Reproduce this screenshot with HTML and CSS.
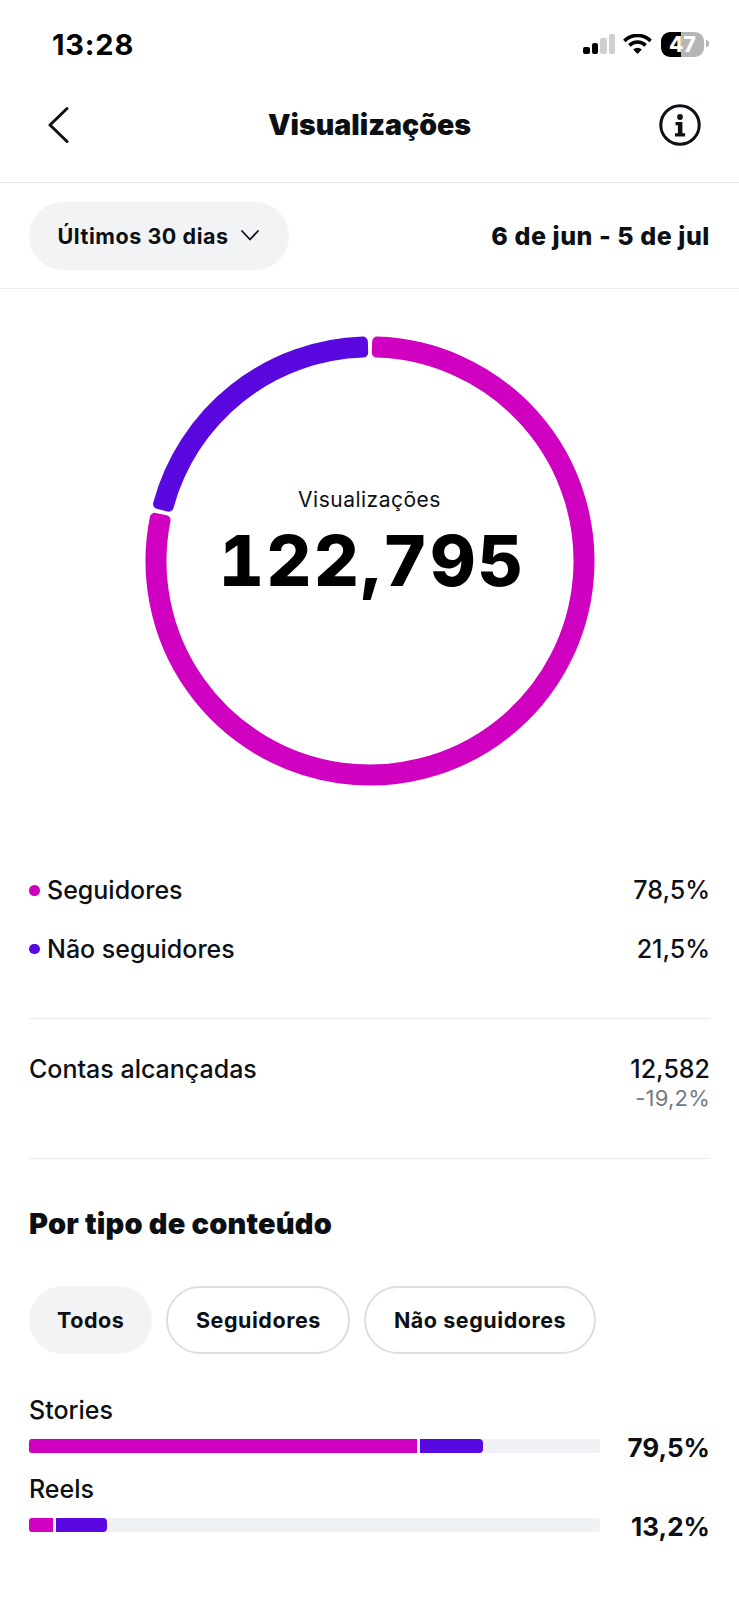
FILE: index.html
```html
<!DOCTYPE html>
<html lang="pt">
<head>
<meta charset="utf-8">
<title>Visualizações</title>
<link rel="stylesheet" href="styles.css">
</head>
<body>
<div class="page">
  <div class="status">
    <span class="time">13:28</span>
    <div class="status-icons">
      <div class="signal">
        <i class="b b1"></i><i class="b b2"></i><i class="b b3"></i><i class="b b4"></i>
      </div>
      <svg class="wifi" width="29" height="20" viewBox="0 0 29 20">
        <path d="M1.4 6.9A18.5 18.5 0 0 1 27.6 6.9M6.4 11.4A11.5 11.5 0 0 1 22.6 11.4" fill="none" stroke="#000" stroke-width="3.6"/>
        <path d="M14.5 20L10.2 15.6A6 6 0 0 1 18.8 15.6Z" fill="#000"/>
      </svg>
      <div class="battery"><span>47</span></div>
    </div>
  </div>

  <header class="nav">
    <svg class="back" width="22" height="38" viewBox="0 0 22 38">
      <path d="M20 2.5L3 19L20 35.5" fill="none" stroke="#0c1014" stroke-width="3" stroke-linecap="round" stroke-linejoin="round"/>
    </svg>
    <h1 class="title">Visualizações</h1>
    <svg class="info" width="42" height="42" viewBox="0 0 42 42">
      <circle cx="21" cy="21" r="19.2" fill="none" stroke="#0c1014" stroke-width="3"/>
      <circle cx="21" cy="13" r="2.9" fill="#0c1014"/>
      <path d="M16.5 18h6.9v11.2h2.7v3.2H16v-3.2h2.9v-8h-2.4z" fill="#0c1014"/>
    </svg>
  </header>

  <div class="filter">
    <div class="pill pill-fill pill-select">Últimos 30 dias
      <svg class="caret" width="18" height="11" viewBox="0 0 18 11">
        <path d="M1 1L9 9.5L17 1" fill="none" stroke="#0c1014" stroke-width="1.8" stroke-linecap="round" stroke-linejoin="round"/>
      </svg>
    </div>
    <div class="range">6 de jun - 5 de jul</div>
  </div>

  <main>
    <div class="ring">
      <svg width="450" height="450" viewBox="0 0 450 450">
        <path class="seg-pink" d="M232.16 5.62A219.5 219.5 0 1 1 9.78 181.88L20.57 184.04A208.5 208.5 0 1 0 231.8 16.61Z"/>
        <path class="seg-blue" d="M217.84 5.62A219.5 219.5 0 0 0 13.05 167.93L23.67 170.79A208.5 208.5 0 0 1 218.2 16.61Z"/>
      </svg>
      <div class="ring-text">
        <div class="ring-label">Visualizações</div>
        <div class="ring-value">122,795</div>
      </div>
    </div>

    <section class="legend">
      <div class="row legend-row"><span class="key"><i class="dot dot-pink"></i>Seguidores</span><span>78,5%</span></div>
      <div class="row legend-row"><span class="key"><i class="dot dot-blue"></i>Não seguidores</span><span>21,5%</span></div>
    </section>

    <section class="reach">
      <div class="row reach-row">
        <span>Contas alcançadas</span>
        <div class="reach-values">
          <div>12,582</div>
          <div class="delta">-19,2%</div>
        </div>
      </div>
    </section>

    <section class="types">
      <h2 class="heading">Por tipo de conteúdo</h2>
      <div class="tabs">
        <div class="pill pill-fill tab-first">Todos</div>
        <div class="pill pill-line">Seguidores</div>
        <div class="pill pill-line">Não seguidores</div>
      </div>
      <div class="metric">
        <div class="metric-name">Stories</div>
        <div class="metric-row">
          <div class="track">
            <div class="part part-pink" style="width:67.9%"></div>
            <div class="part part-blue" style="width:11.1%"></div>
          </div>
          <span class="metric-pct">79,5%</span>
        </div>
      </div>
      <div class="metric">
        <div class="metric-name">Reels</div>
        <div class="metric-row">
          <div class="track">
            <div class="part part-pink" style="width:4.15%"></div>
            <div class="part part-blue" style="width:8.9%"></div>
          </div>
          <span class="metric-pct">13,2%</span>
        </div>
      </div>
    </section>
  </main>
</div>
</body>
</html>
```
FILE: styles.css
```css
* { box-sizing: border-box; }
html, body { margin: 0; background: #fff; }
body { font-family: Inter, "Liberation Sans", sans-serif; color: #0c1014; }
.page { width: 739px; height: 1600px; overflow: hidden; }

.status { height: 88px; padding: 1px 30px 0 52px; display: flex; align-items: center; justify-content: space-between; }
.time { font-size: 29px; font-weight: 700; color: #000; line-height: 1; letter-spacing: 0.8px; }
.status-icons { display: flex; align-items: center; margin-top: -1px; }
.signal { display: flex; align-items: flex-end; gap: 2px; height: 20px; }
.b { display: block; width: 6.5px; border-radius: 2px; background: #000; }
.b1 { height: 7.5px; }
.b2 { height: 11.5px; }
.b3 { height: 16px; background: #cfcfcf; }
.b4 { height: 20px; background: #cfcfcf; }
.wifi { margin-left: 8px; }
.battery { position: relative; margin-left: 9px; margin-right: 5px; width: 43px; height: 25px; border-radius: 9px; background: linear-gradient(90deg, #000 47%, #b5b5b5 47%); display: flex; align-items: center; justify-content: center; color: #fff; font-size: 21px; font-weight: 800; line-height: 1; }
.battery::after { content: ""; position: absolute; right: -5px; top: 8.5px; width: 3px; height: 7px; border-radius: 0 3px 3px 0; background: #b5b5b5; }

.nav { height: 95px; padding: 0 38px 20px; display: grid; grid-template-columns: 1fr auto 1fr; align-items: center; border-bottom: 1px solid #e6e6e8; }
.back { margin-left: 9px; }
.title { margin: 0; font-size: 28.5px; font-weight: 900; line-height: 1; letter-spacing: 0; }
.info { justify-self: end; }

.filter { height: 106px; padding: 0 29px; display: flex; align-items: center; justify-content: space-between; border-bottom: 1px solid #ececee; }
.pill { height: 68px; border-radius: 34px; padding: 0 28px; display: inline-flex; align-items: center; font-size: 21.5px; font-weight: 700; letter-spacing: 0.55px; }
.pill-fill { background: #f2f3f5; }
.pill-line { border: 2px solid #dedede; padding: 0 27.5px; }
.pill-select { padding: 0 30px 0 28.5px; }
.caret { margin-left: 12px; }
.range { font-size: 25px; font-weight: 800; letter-spacing: 0.55px; }

.ring { position: relative; width: 450px; height: 450px; margin: 47px auto 0; }
.ring svg { display: block; }
.seg-pink, .seg-blue { stroke-width: 10; stroke-linejoin: round; }
.seg-pink { fill: #d000c1; stroke: #d000c1; }
.seg-blue { fill: #5908df; stroke: #5908df; }
.ring-text { position: absolute; left: 0; right: 0; top: 150px; text-align: center; color: #000; }
.ring-label { font-size: 21px; font-weight: 400; line-height: 28px; letter-spacing: 0.5px; color: #0c1014; }
.ring-value { font-size: 70px; font-weight: 800; line-height: 80px; letter-spacing: 2.4px; margin-top: 7px; padding-left: 5px; font-variant-numeric: tabular-nums; }

.row { display: flex; justify-content: space-between; font-size: 25px; font-weight: 500; }
.legend { margin: 75px 29px 0; height: 158px; border-bottom: 1px solid #ececee; }
.legend-row { height: 58.5px; align-items: center; }
.key { display: flex; align-items: center; }
.dot { width: 10.5px; height: 10.5px; border-radius: 50%; margin-right: 7.5px; }
.dot-pink { background: #d000c1; }
.dot-blue { background: #5908df; }

.reach { margin: 0 29px; height: 140px; border-bottom: 1px solid #ececee; padding-top: 35px; }
.reach-row { line-height: 30px; }
.reach-values { text-align: right; }
.delta { font-size: 22px; font-weight: 400; line-height: 26px; letter-spacing: 0.2px; color: #737a85; margin-top: 1px; }

.types { padding: 0 29px; }
.heading { margin: 48px 0 0; font-size: 29px; font-weight: 900; line-height: 34px; letter-spacing: 0.2px; }
.tabs { display: flex; gap: 14px; margin-top: 45px; }
.metric-name { font-size: 25px; font-weight: 500; line-height: 29px; }
.tabs + .metric { margin-top: 42px; }
.metric + .metric { margin-top: 8px; }
.metric-row { display: flex; align-items: center; justify-content: space-between; height: 42px; }
.track { width: 571px; height: 14.5px; border-radius: 3px; background: #f0f1f5; display: flex; gap: 3px; overflow: hidden; }
.part { height: 100%; }
.part-pink { background: #d000c1; }
.part-blue { background: #5908df; border-radius: 0 4px 4px 0; }
.metric-pct { font-size: 26px; font-weight: 700; margin-top: 2px; }
```
